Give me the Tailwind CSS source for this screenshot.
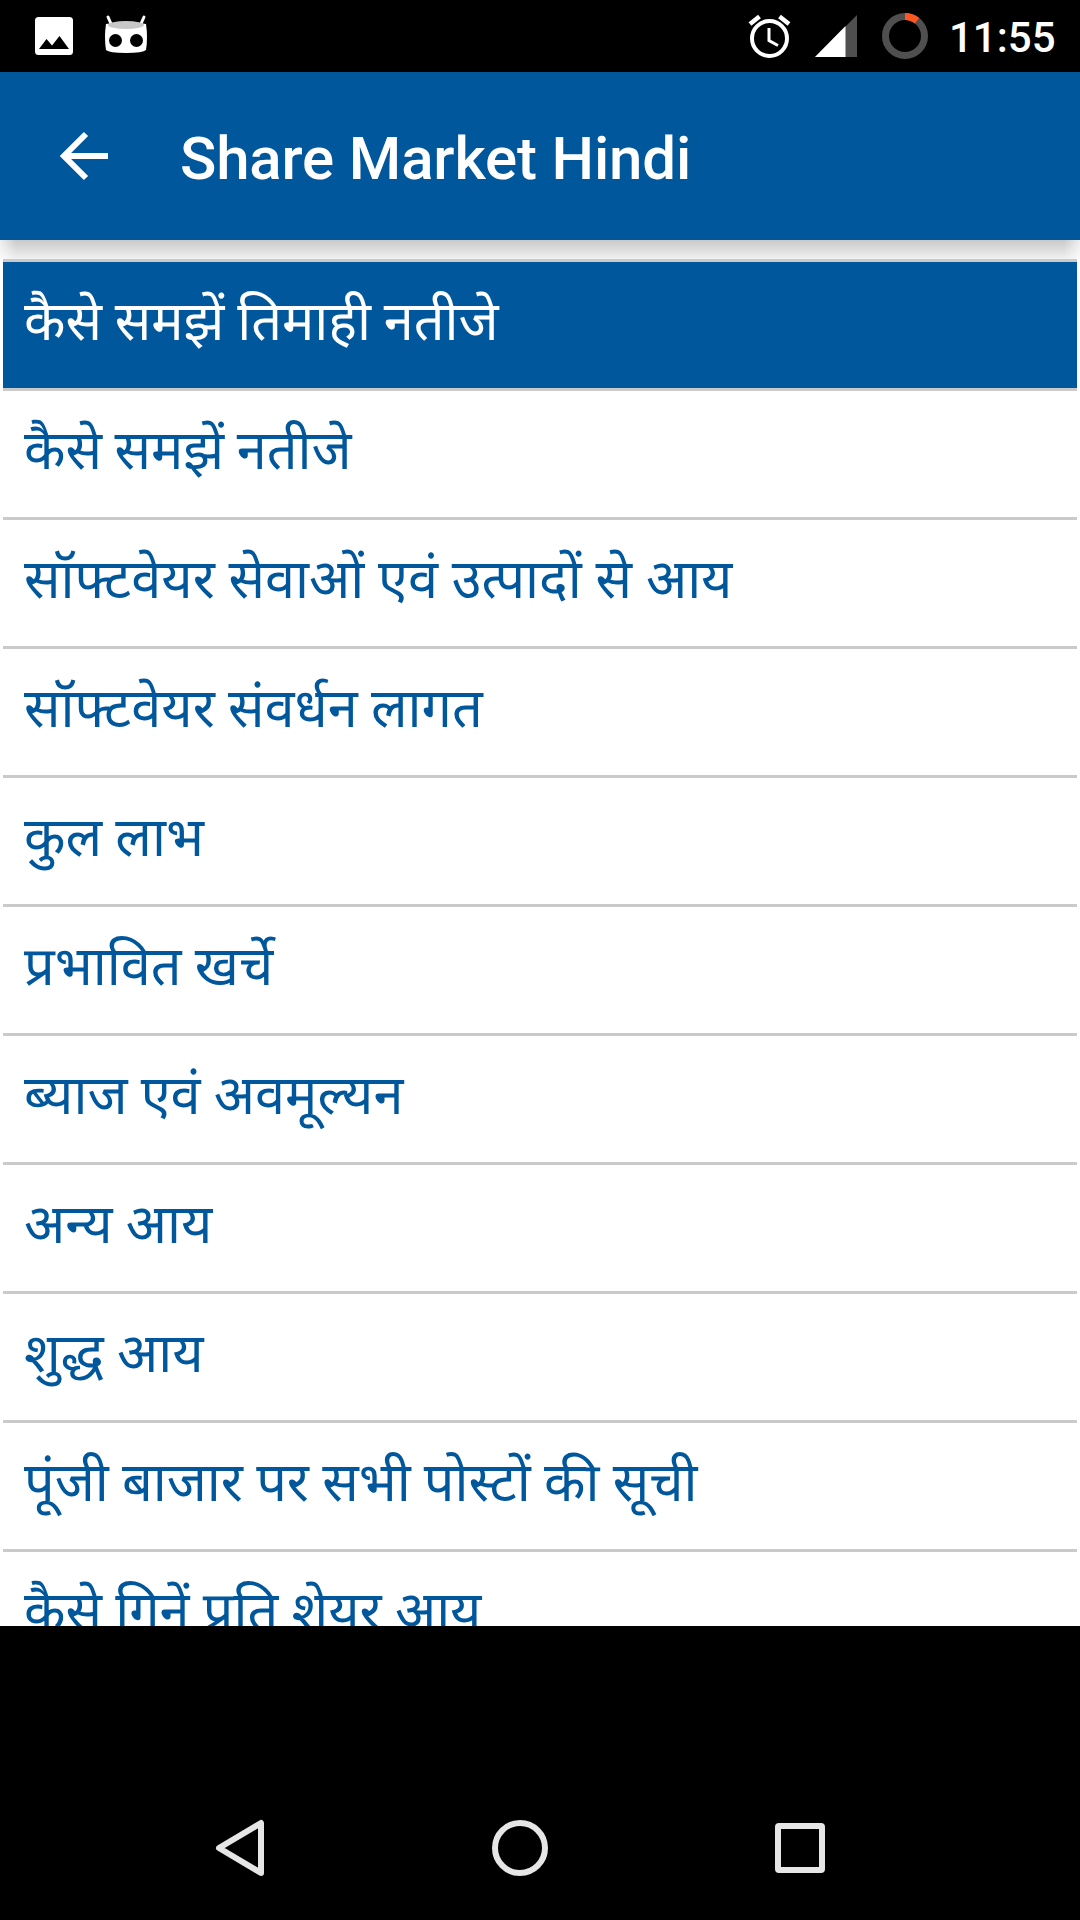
<!DOCTYPE html>
<html lang="hi">
  <head>
    <meta charset="UTF-8" />
    <meta name="viewport" content="width=device-width, initial-scale=1.0" />
    <title>Share Market Hindi</title>
    <script src="https://cdn.jsdelivr.net/npm/@tailwindcss/browser@4"></script>
  </head>
  <body class="bg-black font-['Roboto','Noto_Sans',sans-serif]">
    <div class="w-[1080px] h-[1920px] flex flex-col overflow-hidden bg-black">
      <!-- Status bar -->
      <div class="h-[72px] shrink-0 flex items-center justify-between text-white">
        <svg class="w-[160px] h-[72px]" viewBox="0 0 160 72">
          <rect x="35" y="17" width="38" height="38" rx="3.500" fill="#fff" />
          <path d="M39 49l7.500-10 5.500 6.500L59.500 36 69 49z" fill="#000" />
          <path d="M108 17l4 9M144 17l-4 9" stroke="#fff" stroke-width="3" stroke-linecap="round" />
          <path d="M106 24Q126 20 146 24Q148 37 146 50Q143 53 126 53Q109 53 106 50Q104 37 106 24z" fill="#fff" />
          <ellipse cx="126" cy="25" rx="18" ry="4" fill="#c8c8c8" />
          <circle cx="115.500" cy="40.500" r="6.500" fill="#000" />
          <circle cx="136.500" cy="40.500" r="6.500" fill="#000" />
        </svg>
        <div class="flex items-center">
          <svg class="w-[190px] h-[72px]" viewBox="740 0 190 72" fill="none">
            <circle cx="769.500" cy="38.500" r="17.500" stroke="#fff" stroke-width="4" />
            <path d="M769 28v12.500l9 5" stroke="#fff" stroke-width="3" />
            <path d="M750 24l9.500-7.500M779.500 16.500l9.500 7.500" stroke="#fff" stroke-width="4.500" />
            <path d="M857 15v42h-42z" fill="#4f4f4f" />
            <path d="M845.500 26v31H815z" fill="#fff" />
            <circle cx="905" cy="36" r="19.500" stroke="#4f4f4f" stroke-width="7" />
            <path d="M905 16.500A19.500 19.500 0 0 1 917 20.700" stroke="#ff5722" stroke-width="7" />
          </svg>
          <span class="w-[131px] ml-[19px] mt-1 text-[42px] leading-none font-medium">11:55</span>
        </div>
      </div>

      <!-- App bar -->
      <div class="h-[168px] shrink-0 flex items-center bg-[#01579b] text-white">
        <svg class="w-[60px] h-[60px] ml-[54px]" viewBox="54 126 60 60" fill="none">
          <path d="M86 134L64 156 86 178M63 156h45" stroke="#fff" stroke-width="6" />
        </svg>
        <h1 class="ml-[66px] mt-[5px] text-[60px] leading-none font-medium tracking-[-0.15px] whitespace-nowrap">Share Market Hindi</h1>
      </div>

      <!-- Topic list -->
      <div class="h-[1386px] shrink-0 overflow-hidden bg-white">
        <div class="h-[19px] flex justify-between bg-linear-to-b from-[#c9c9c9] to-[#f1f1f1]">
          <div class="w-4 bg-linear-to-r from-white/70 to-white/0"></div>
          <div class="w-4 bg-linear-to-l from-white/70 to-white/0"></div>
        </div>
        <ul class="mx-[3px] border-t-3 border-[#cacaca] font-['Noto_Sans_Devanagari','Noto_Sans',sans-serif] text-[54px] leading-[120px] [word-spacing:-0.8px] text-[#01579b] whitespace-nowrap">
          <li class="h-[129px] px-[21px] pt-[5px] border-b-3 border-[#cacaca] bg-[#01579b] text-white [word-spacing:-1.2px]">कैसे समझें तिमाही नतीजे</li>
          <li class="h-[129px] px-[21px] pt-[5px] border-b-3 border-[#cacaca] [word-spacing:-1.5px]">कैसे समझें नतीजे</li>
          <li class="h-[129px] px-[21px] pt-[5px] border-b-3 border-[#cacaca] [word-spacing:-0.2px]">सॉफ्टवेयर सेवाओं एवं उत्पादों से आय</li>
          <li class="h-[129px] px-[21px] pt-[5px] border-b-3 border-[#cacaca]">सॉफ्टवेयर संवर्धन लागत</li>
          <li class="h-[129px] px-[21px] pt-[5px] border-b-3 border-[#cacaca]">कुल लाभ</li>
          <li class="h-[129px] px-[21px] pt-[5px] border-b-3 border-[#cacaca]">प्रभावित खर्चे</li>
          <li class="h-[129px] px-[21px] pt-[5px] border-b-3 border-[#cacaca]">ब्याज एवं अवमूल्यन</li>
          <li class="h-[129px] px-[21px] pt-[5px] border-b-3 border-[#cacaca]">अन्य आय</li>
          <li class="h-[129px] px-[21px] pt-[5px] border-b-3 border-[#cacaca]">शुद्ध आय</li>
          <li class="h-[129px] px-[21px] pt-[5px] border-b-3 border-[#cacaca]">पूंजी बाजार पर सभी पोस्टों की सूची</li>
          <li class="h-[129px] px-[21px] pt-[5px]">कैसे गिनें प्रति शेयर आय</li>
        </ul>
      </div>

      <!-- Navigation bar -->
      <div class="mt-auto h-[144px] shrink-0 flex items-center">
        <svg class="w-[1080px] h-[144px]" viewBox="0 1776 1080 144" fill="none" stroke="#e6e6e6" stroke-width="6" stroke-linejoin="round">
          <path d="M261 1823v50L219 1848z" />
          <circle cx="520" cy="1848" r="25" />
          <rect x="778" y="1826" width="44" height="44" rx="1" />
        </svg>
      </div>
    </div>
  </body>
</html>
